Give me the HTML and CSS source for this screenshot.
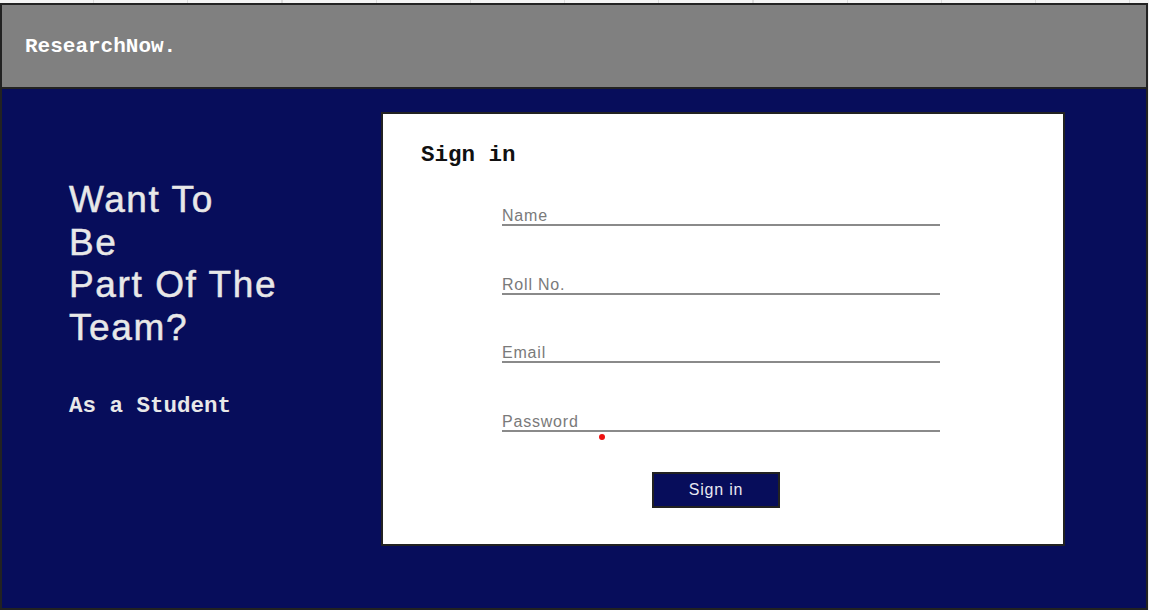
FILE: index.html
```html
<!DOCTYPE html>
<html lang="en">
<head>
<meta charset="utf-8">
<title>ResearchNow.</title>
<link rel="stylesheet" href="styles.css">
</head>
<body>
<div class="grid-strip"></div>
<div class="frame">
  <header class="topbar">
    <div class="logo">ResearchNow.</div>
  </header>
  <main class="main">
    <section class="intro">
      <h1 class="headline">Want To<br>Be<br>Part Of The<br>Team?</h1>
      <p class="role">As a Student</p>
    </section>
    <section class="card">
      <h2 class="card-title">Sign in</h2>
      <form class="form">
        <input class="field" type="text" placeholder="Name">
        <input class="field" type="text" placeholder="Roll No.">
        <input class="field" type="email" placeholder="Email">
        <input class="field" type="password" placeholder="Password">
        <span class="cursor-dot"></span>
        <button class="submit" type="button">Sign in</button>
      </form>
    </section>
  </main>
</div>
</body>
</html>
```

FILE: styles.css
```css
* { box-sizing: border-box; }

html, body {
  margin: 0;
  padding: 0;
  background: #f4f4f4;
  overflow: hidden;
}

body {
  width: 1149px;
  height: 610px;
  font-family: "Liberation Sans", Arial, sans-serif;
}

.grid-strip {
  height: 3px;
  background-color: #f4f4f4;
  background-image: repeating-linear-gradient(to right, transparent 0, transparent 93px, #dcdcdc 93px, #dcdcdc 94.2px);
}

.frame {
  width: 1148px;
  height: 607px;
  border: 2px solid #222;
  display: flex;
  flex-direction: column;
  background: #070d5b;
}

.topbar {
  height: 84px;
  flex: none;
  background: #808080;
  border-bottom: 2px solid #222;
  display: flex;
  align-items: center;
  padding-left: 23px;
  padding-top: 1px;
}

.logo {
  font-family: "Liberation Mono", "DejaVu Sans Mono", monospace;
  font-weight: bold;
  font-size: 21px;
  line-height: 24px;
  color: #ffffff;
}

.main {
  flex: 1;
  display: flex;
  align-items: flex-start;
  padding-top: 23px;
}

.intro {
  width: 379px;
  flex: none;
  padding-left: 67px;
  padding-top: 67px;
  color: #e8e8e8;
}

.headline {
  margin: 0;
  font-family: "Liberation Sans", Arial, sans-serif;
  font-weight: normal;
  font-size: 37px;
  line-height: 42.5px;
  letter-spacing: 1.6px;
  -webkit-text-stroke: 0.5px #e8e8e8;
}

.role {
  margin: 44px 0 0;
  font-family: "Liberation Mono", "DejaVu Sans Mono", monospace;
  font-weight: bold;
  font-size: 22.5px;
  line-height: 26px;
}

.card {
  width: 684px;
  height: 434px;
  flex: none;
  background: #ffffff;
  border: 2px solid #222;
  padding: 28px 0 0 38px;
}

.card-title {
  margin: 0;
  font-family: "Liberation Mono", "DejaVu Sans Mono", monospace;
  font-weight: bold;
  font-size: 22.5px;
  line-height: 26px;
  color: #111;
}

.form {
  position: relative;
  width: 438px;
  margin: 36px 0 0 81px;
  display: flex;
  flex-direction: column;
  align-items: flex-start;
  gap: 46.5px;
}

.field {
  width: 100%;
  height: 22px;
  margin: 0;
  padding: 4px 0 0;
  border: none;
  border-bottom: 2px solid #8a8a8a;
  outline: none;
  background: transparent;
  font-family: "Liberation Sans", Arial, sans-serif;
  font-size: 16px;
  line-height: 16px;
  letter-spacing: 0.8px;
  color: #555;
}

.field::placeholder {
  color: #7a7a7a;
  opacity: 1;
}

.cursor-dot {
  position: absolute;
  left: 97px;
  top: 230px;
  width: 6px;
  height: 6px;
  border-radius: 50%;
  background: #ee1111;
}

.submit {
  margin: -6.5px 0 0 150px;
  width: 128px;
  height: 36px;
  background: #070d5b;
  border: 2px solid #222;
  color: #e8e8f2;
  font-family: "Liberation Sans", Arial, sans-serif;
  font-size: 16px;
  letter-spacing: 0.8px;
  padding: 0;
  cursor: pointer;
}
```
